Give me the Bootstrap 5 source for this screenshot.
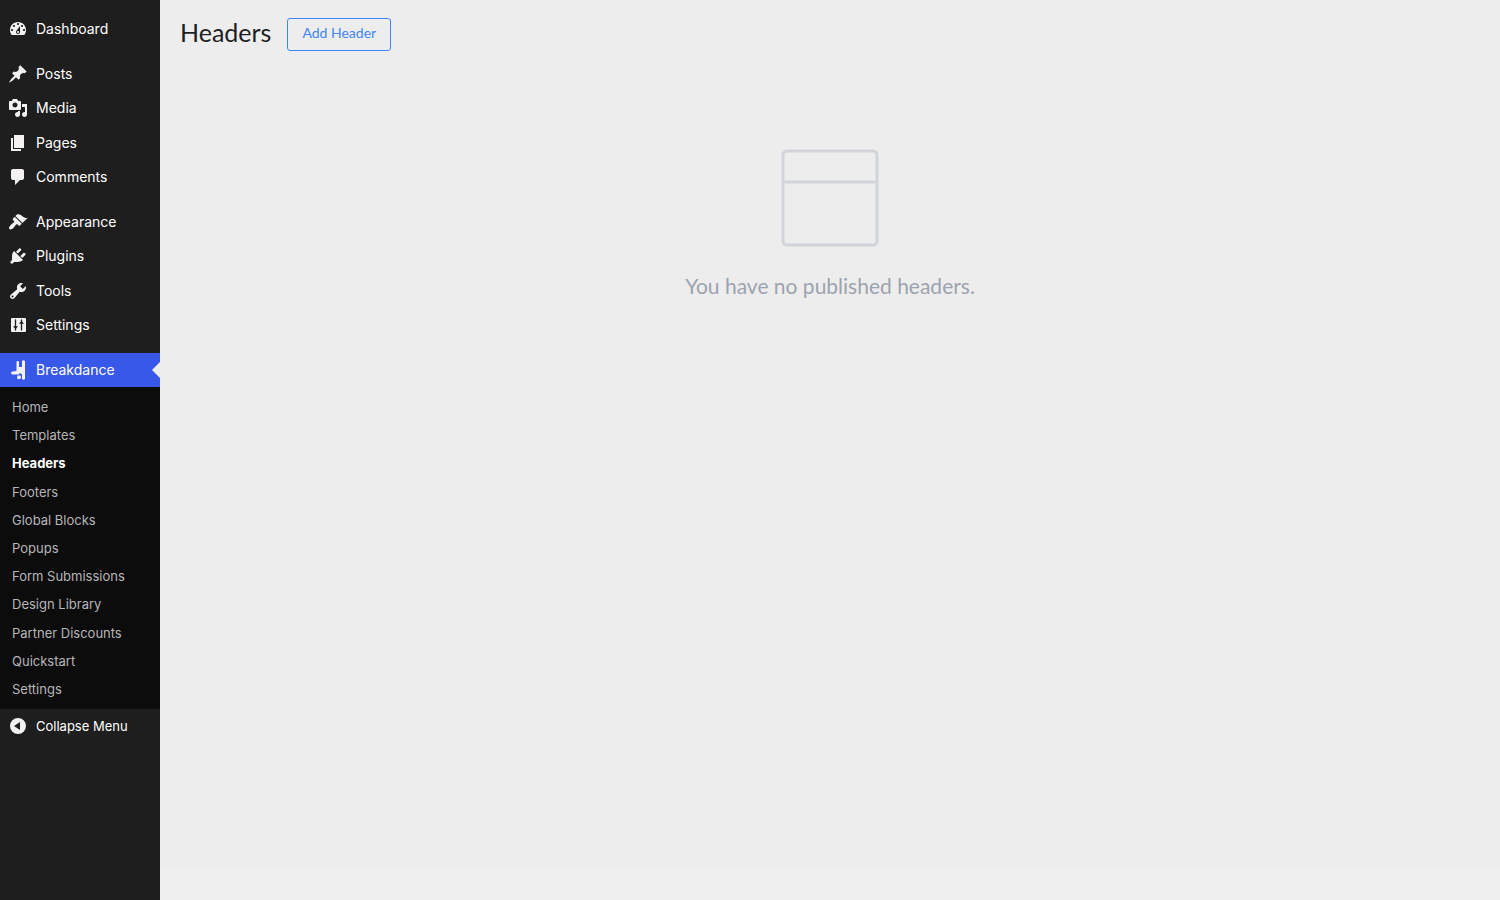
<!DOCTYPE html>
<html lang="en">
<head>
<meta charset="utf-8">
<meta name="viewport" content="width=device-width, initial-scale=1">
<title>Headers</title>
<link href="https://cdn.jsdelivr.net/npm/bootstrap@5.3.0/dist/css/bootstrap.min.css" rel="stylesheet">
<style>
  body { background: #efefef; font-family: Inter, "Liberation Sans", sans-serif; }
  .sidebar { width: 160px; background: #1e1e1e; padding-top: 12px; }
  .menu-link { height: 34px; padding: 0 8px; gap: 8px; color: #fff; font-size: 14px; line-height: 20px; background: none; border: 0; }
  .menu-link svg { width: 20px; height: 20px; fill: #f3f1f1; flex: none; }
  .menu-group { margin-bottom: 11px; }
  .menu-group-tall { min-height: 137px; }
  .menu-link.current { background: #3858e9; }
  .menu-link.current::after { content: ""; position: absolute; right: 0; top: 9px; border: 8px solid transparent; border-left: 0; border-right-color: #ededed; }
  .submenu { background: #0c0c0c; min-height: 322px; padding: 6px 0; }
  .submenu a { height: 28px; padding: 0 12px; color: #b6b6b8; font-size: 13px; line-height: 28px; }
  .submenu a.active { color: #fff; font-weight: 700; }
  .collapse-link { font-size: 13px; }
  .workspace { background: #ededed; min-height: calc(100vh - 32px); font-family: Lato, "Liberation Sans", sans-serif; padding: 18px 20px; }
  .page-title { font-size: 25px; line-height: 28px; color: #1d1f23; }
  .add-btn { height: 33px; padding: 4px 14px 7px; font-size: 14px; line-height: 20px; border: 1px solid #4285f4; border-radius: 3px; color: #4285f4; }
  .empty-state { margin-top: 97px; color: #9ca3af; font-size: 21px; line-height: 32px; }
  .empty-state svg { width: 100px; height: 100px; margin-bottom: 22px; }
</style>
</head>
<body>
<div class="d-flex min-vh-100">
  <nav class="sidebar flex-shrink-0" aria-label="Main menu">
    <ul class="list-unstyled menu-group">
      <li><a href="#" class="menu-link d-flex align-items-center text-decoration-none"><svg viewBox="0 0 20 20"><path fill-rule="evenodd" d="M3.76 16h12.48c1.1-1.37 1.76-3.11 1.76-5 0-4.42-3.58-8-8-8s-8 3.58-8 8c0 1.89.66 3.63 1.76 5zM10 4c.55 0 1 .45 1 1s-.45 1-1 1-1-.45-1-1 .45-1 1-1zM6 6c.55 0 1 .45 1 1s-.45 1-1 1-1-.45-1-1 .45-1 1-1zm8 0c.55 0 1 .45 1 1s-.45 1-1 1-1-.45-1-1 .45-1 1-1zm-5.370 5.550L12 7v6c0 1.100-.9 2-2 2s-2-.9-2-2c0-.57.24-1.080.63-1.450zM4 10c.55 0 1 .45 1 1s-.45 1-1 1-1-.45-1-1 .45-1 1-1zm12 0c.55 0 1 .45 1 1s-.45 1-1 1-1-.45-1-1 .45-1 1-1zm-5 3c0-.55-.45-1-1-1s-1 .45-1 1 .45 1 1 1 1-.45 1-1z"/></svg>Dashboard</a></li>
    </ul>
    <ul class="list-unstyled menu-group menu-group-tall d-flex flex-column justify-content-between">
      <li><a href="#" class="menu-link d-flex align-items-center text-decoration-none"><svg viewBox="0 0 20 20"><path d="M10.44 3.02l1.82-1.82 6.36 6.35-1.83 1.82c-1.05-.68-2.48-.57-3.41.36l-.75.75c-.92.93-1.04 2.35-.35 3.41l-1.83 1.82-2.41-2.41-2.8 2.79c-.42.42-3.38 2.71-3.8 2.29s1.86-3.39 2.28-3.81l2.79-2.79L4.1 9.36l1.83-1.82c1.05.69 2.48.57 3.4-.36l.75-.75c.93-.92 1.05-2.35.36-3.41z"/></svg>Posts</a></li>
      <li><a href="#" class="menu-link d-flex align-items-center text-decoration-none"><svg viewBox="0 0 20 20"><path fill-rule="evenodd" d="M13 11V4c0-.55-.45-1-1-1h-1.67L9 1H5L3.67 3H2c-.55 0-1 .45-1 1v7c0 .55.45 1 1 1h10c.55 0 1-.45 1-1zM7 4.5c1.38 0 2.5 1.12 2.5 2.5S8.38 9.5 7 9.5 4.5 8.38 4.5 7 5.62 4.5 7 4.5zM14 6h5v10.500c0 1.380-1.120 2.500-2.500 2.500S14 17.880 14 16.500s1.120-2.500 2.500-2.500c.17 0 .34.02.5.05V9h-3V6zm-4 8.050V13h2v3.500c0 1.380-1.120 2.500-2.500 2.500S7 17.880 7 16.500 8.120 14 9.500 14c.17 0 .34.02.5.05z"/></svg>Media</a></li>
      <li><a href="#" class="menu-link d-flex align-items-center text-decoration-none"><svg viewBox="0 0 20 20"><path d="M6 15V2h10v13H6zm-1 1h8v2H3V5h2v11z"/></svg>Pages</a></li>
      <li><a href="#" class="menu-link d-flex align-items-center text-decoration-none"><svg viewBox="0 0 20 20"><path d="M5 2h9c1.100 0 2 .9 2 2v7c0 1.100-.9 2-2 2h-2l-5 5v-5H5c-1.100 0-2-.9-2-2V4c0-1.100.9-2 2-2z"/></svg>Comments</a></li>
    </ul>
    <ul class="list-unstyled menu-group menu-group-tall d-flex flex-column justify-content-between">
      <li><a href="#" class="menu-link d-flex align-items-center text-decoration-none"><svg viewBox="0 0 20 20"><path d="M14.480 11.060L7.410 3.990l1.500-1.500c.5-.56 2.300-.47 3.510.32 1.210.8 1.430 1.280 2.910 2.100 1.180.64 2.450 1.260 4.450.85zm-.71.71L6.700 4.700 4.930 6.470c-.39.39-.39 1.020 0 1.410l1.060 1.060c.39.39.39 1.030 0 1.420-.6.6-1.430 1.110-2.210 1.690-.35.26-.7.53-1.010.84C1.430 14.230.4 16.080 1.400 17.070c.99 1 2.840-.03 4.180-1.360.31-.31.58-.66.85-1.020.57-.78 1.080-1.610 1.690-2.210.39-.39 1.020-.39 1.410 0l1.060 1.060c.39.39 1.020.39 1.410 0z"/></svg>Appearance</a></li>
      <li><a href="#" class="menu-link d-flex align-items-center text-decoration-none"><svg viewBox="0 0 20 20"><path d="M13.110 4.360L9.870 7.600 8 5.730l3.240-3.240c.35-.34 1.050-.2 1.560.32.52.51.66 1.210.31 1.550zm-8 1.770l.91-1.120 9.010 9.010-1.190.84c-.71.71-2.630 1.160-3.820 1.160H6.140L4.900 17.260c-.59.59-1.540.59-2.120 0-.59-.58-.59-1.530 0-2.120l1.240-1.240v-3.880c0-1.130.4-3.190 1.090-3.890zm7.260 3.970l3.240-3.240c.34-.35 1.040-.21 1.550.31.52.51.66 1.210.31 1.550l-3.240 3.250z"/></svg>Plugins</a></li>
      <li><a href="#" class="menu-link d-flex align-items-center text-decoration-none"><svg viewBox="0 0 20 20"><path fill-rule="evenodd" d="M16.680 9.770c-1.340 1.340-3.300 1.670-4.950.99l-5.410 6.520c-.99.99-2.590.99-3.580 0s-.99-2.590 0-3.570l6.520-5.420c-.68-1.650-.35-3.610.99-4.950 1.280-1.280 3.120-1.620 4.720-1.060l-2.890 2.890 2.820 2.820 2.860-2.870c.53 1.580.18 3.390-1.080 4.650zM3.810 16.210c.4.39 1.040.39 1.430 0 .4-.4.4-1.040 0-1.430-.39-.4-1.030-.4-1.430 0-.39.39-.39 1.030 0 1.430z"/></svg>Tools</a></li>
      <li><a href="#" class="menu-link d-flex align-items-center text-decoration-none"><svg viewBox="0 0 20 20"><rect x="3" y="3" width="15" height="14" rx="1"/><path d="M7.500 5v10M13.500 5v10" fill="none" stroke="#1e1e1e" stroke-width="1.300" stroke-linecap="round"/><path d="M5 11.300h5L7.500 14.200zM11 8.700h5L13.500 5.800z" fill="#1e1e1e"/></svg>Settings</a></li>
    </ul>
    <a href="#" class="menu-link current position-relative d-flex align-items-center text-decoration-none"><svg viewBox="0 0 20 20"><path d="M8.500 1.500q1.300-1.200 2.500 0V7h3V1q1.500-1.500 3 0v18q-1.500 1.500-3 0v-4.500L12 13q-1 1.500-2.500 1.500h-5q-1.500-.2-1.500-1.500t1.500-1.400L8.500 11z"/><circle cx="11" cy="17.200" r="2"/></svg>Breakdance</a>
    <div class="submenu d-flex flex-column justify-content-between">
      <a href="#" class="text-decoration-none">Home</a>
      <a href="#" class="text-decoration-none">Templates</a>
      <a href="#" class="text-decoration-none active" aria-current="page">Headers</a>
      <a href="#" class="text-decoration-none">Footers</a>
      <a href="#" class="text-decoration-none">Global Blocks</a>
      <a href="#" class="text-decoration-none">Popups</a>
      <a href="#" class="text-decoration-none">Form Submissions</a>
      <a href="#" class="text-decoration-none">Design Library</a>
      <a href="#" class="text-decoration-none">Partner Discounts</a>
      <a href="#" class="text-decoration-none">Quickstart</a>
      <a href="#" class="text-decoration-none">Settings</a>
    </div>
    <button type="button" class="menu-link collapse-link d-flex align-items-center w-100"><svg viewBox="0 0 20 20"><path fill-rule="evenodd" d="M10 2a8 8 0 1 0 0 16 8 8 0 0 0 0-16zM12 6v8l-6-4z"/></svg>Collapse Menu</button>
  </nav>
  <div class="flex-grow-1">
    <main class="workspace">
      <header class="d-flex align-items-start gap-3">
        <h1 class="page-title fw-normal mb-0">Headers</h1>
        <button type="button" class="btn add-btn">Add Header</button>
      </header>
      <section class="empty-state d-flex flex-column align-items-center">
        <svg viewBox="0 0 100 100" fill="none" stroke="#d1d5db" stroke-width="3" aria-hidden="true"><rect x="3" y="3" width="94" height="94" rx="4"/><path d="M3 34h94"/></svg>
        <p class="mb-0">You have no published headers.</p>
      </section>
    </main>
  </div>
</div>
<script src="https://cdn.jsdelivr.net/npm/bootstrap@5.3.0/dist/js/bootstrap.bundle.min.js"></script>
</body>
</html>
